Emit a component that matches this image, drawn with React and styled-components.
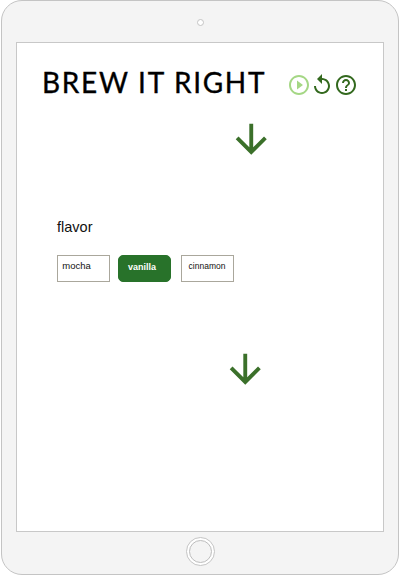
import React from "react";
import styled, { createGlobalStyle } from "styled-components";
import {
  MdPlayCircleOutline,
  MdReplay,
  MdHelpOutline,
  MdArrowDownward,
} from "react-icons/md";

const GlobalStyle = createGlobalStyle`
  * { box-sizing: border-box; }
  body { margin: 0; background: #fff; }
`;

const Page = styled.main`
  width: 400px;
  height: 575px;
  padding: 0 1px;
  overflow: hidden;
  font-family: "Liberation Sans", Arial, sans-serif;
  color: #111;
`;

const Tablet = styled.div`
  display: flex;
  flex-direction: column;
  align-items: center;
  height: 575px;
  padding: 0 14px;
  background: #f4f4f4;
  border: 1px solid #c4c4c4;
  border-radius: 21px;
`;

const CameraBar = styled.div`
  display: flex;
  justify-content: center;
  flex: none;
  height: 41px;
  padding-top: 18px;
`;

const Camera = styled.span`
  width: 7px;
  height: 7px;
  border: 1px solid #c4c4c4;
  border-radius: 50%;
  background: #fff;
`;

const Screen = styled.section`
  display: flex;
  flex-direction: column;
  flex: none;
  width: 368px;
  height: 490px;
  background: #fff;
  border: 1px solid #c8c8c8;
`;

const HomeButton = styled.div`
  display: grid;
  place-items: center;
  flex: none;
  width: 29px;
  height: 29px;
  margin-top: 5px;
  border: 1px solid #c4c4c4;
  border-radius: 50%;
  background: #fff;
`;

const HomeRing = styled.span`
  width: 23px;
  height: 23px;
  border: 1px solid #bdbdbd;
  border-radius: 50%;
  background: #f4f4f4;
`;

const Header = styled.header`
  display: flex;
  align-items: flex-start;
  height: 73px;
  padding: 21px 0 0 25px;
`;

const Title = styled.h1`
  flex: none;
  width: 244.5px;
  margin: 0;
  font: 400 28px/36px Lato, sans-serif;
  letter-spacing: 1.7px;
  white-space: nowrap;
  color: #000;
  -webkit-text-stroke: 0.35px #000;
`;

const Actions = styled.div`
  display: flex;
  gap: 0;
  margin-top: 8.5px;
`;

const IconButton = styled.button`
  display: flex;
  flex: none;
  width: 23.5px;
  height: 24px;
  padding: 0;
  border: 0;
  background: none;
  color: ${(p) => (p.$muted ? "#a5d785" : "#33691e")};
  font-size: 24px;

  svg {
    flex: none;
  }
`;

const ArrowRow = styled.div`
  display: flex;
  height: 47px;
  padding-left: ${(p) => p.$indent}px;
  color: #3b702a;
  font-size: 46.5px;
`;

const Flavor = styled.section`
  height: 132px;
  margin-top: 51px;
  padding: 0 0 0 40px;
`;

const Label = styled.h2`
  margin: 0;
  padding-top: 4px;
  font-size: 14.5px;
  font-weight: 400;
  line-height: 18px;
`;

const Choices = styled.div`
  display: flex;
  gap: 8px;
  margin-top: 19px;
`;

const Choice = styled.button`
  width: 53px;
  height: 27px;
  padding: ${(p) => (p.$selected ? "0 5px 3px 0" : "0 1px 5px 0")};
  border: 1px solid ${(p) => (p.$selected ? "#28722a" : "#aaa79c")};
  border-radius: ${(p) => (p.$selected ? 5 : 0)}px;
  background: ${(p) => (p.$selected ? "#28722a" : "#fff")};
  color: ${(p) => (p.$selected ? "#fff" : "#111")};
  font-family: inherit;
  font-size: ${(p) => p.$size}px;
  font-weight: ${(p) => (p.$selected ? 700 : 400)};
  line-height: 12px;
  text-align: center;
`;

const FirstChoice = styled(Choice)`
  padding-right: 14px;
`;

const LastChoice = styled(Choice)`
  margin-left: 2px;
`;

export default function App() {
  return (
    <Page>
      <GlobalStyle />
      <Tablet>
        <CameraBar>
          <Camera />
        </CameraBar>
        <Screen>
          <Header>
            <Title>BREW IT RIGHT</Title>
            <Actions>
              <IconButton $muted aria-label="Play">
                <MdPlayCircleOutline />
              </IconButton>
              <IconButton aria-label="Restart">
                <MdReplay />
              </IconButton>
              <IconButton aria-label="Help">
                <MdHelpOutline />
              </IconButton>
            </Actions>
          </Header>
          <ArrowRow $indent={211}>
            <MdArrowDownward />
          </ArrowRow>
          <Flavor>
            <Label>flavor</Label>
            <Choices>
              <FirstChoice $size={9.5}>mocha</FirstChoice>
              <Choice $size={9} $selected>
                vanilla
              </Choice>
              <LastChoice $size={8.5}>cinnamon</LastChoice>
            </Choices>
          </Flavor>
          <ArrowRow $indent={204.5}>
            <MdArrowDownward />
          </ArrowRow>
        </Screen>
        <HomeButton>
          <HomeRing />
        </HomeButton>
      </Tablet>
    </Page>
  );
}
